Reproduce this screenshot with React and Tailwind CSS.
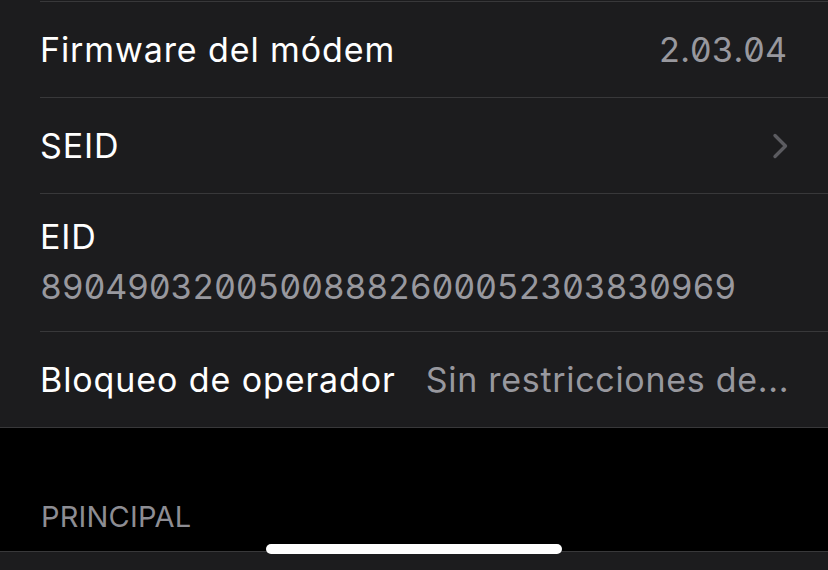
import React from "react";

function Chevron() {
    return (
        <svg width="16" height="26" viewBox="0 0 16 26" fill="none">
            <path d="M3 2.5L13.5 13L3 23.5" stroke="#5b5b60" strokeWidth="3.4" strokeLinecap="round" strokeLinejoin="round"/>
        </svg>
    );
}

function Row({label, value, chevron}) {
    return (
        <div className="pl-[40px]">
            <div className="flex items-center h-[96px] pr-[41px] border-t border-[#38383a]">
                <span className="shrink-0 text-white">{label}</span>
                {value && (
                    <span className="ml-auto pl-[33px] whitespace-nowrap text-[#98989e] tabular-nums slashed-zero tracking-[0px]">{value}</span>
                )}
                {chevron && <span className="ml-auto -mr-[1px] flex"><Chevron/></span>}
            </div>
        </div>
    );
}

export default function App() {
    return (
        <div className="relative h-[570px] w-[828px] overflow-hidden bg-black text-[34px] leading-[41px] tracking-[0.9px] font-['Inter',sans-serif]">
            <div className="bg-[#1c1c1e] pt-px">
                <Row label="Firmware del módem" value="2.03.04"/>
                <Row label="SEID" chevron/>

                <div className="pl-[40px]">
                    <div className="flex flex-col h-[138px] pt-[22px] border-t border-[#38383a]">
                        <span className="text-white">EID</span>
                        <span className="mt-[9px] text-[#98989e] tabular-nums slashed-zero tracking-[-0.3px]">89049032005008882600052303830969</span>
                    </div>
                </div>

                <div className="border-b border-[#38383a]">
                    <div className="pl-[40px]">
                        <div className="flex items-center h-[96px] pr-[41px] border-t border-[#38383a]">
                            <span className="shrink-0 text-white">Bloqueo de operador</span>
                            <span className="ml-auto pl-[30px] whitespace-nowrap text-[#98989e] tracking-[0.7px]">Sin restricciones de...</span>
                        </div>
                    </div>
                </div>
            </div>

            <div className="h-[123px] flex items-end pl-[41px] pb-[17px]">
                <span className="text-[29px] leading-[34px] tracking-[0.2px] text-[#8d8d93]">PRINCIPAL</span>
            </div>

            <div className="h-[40px] bg-[#1c1c1e] border-t border-[#38383a]"></div>

            <div className="absolute left-1/2 -translate-x-1/2 top-[544px] w-[296px] h-[10px] rounded-full bg-white"></div>
        </div>
    );
}
